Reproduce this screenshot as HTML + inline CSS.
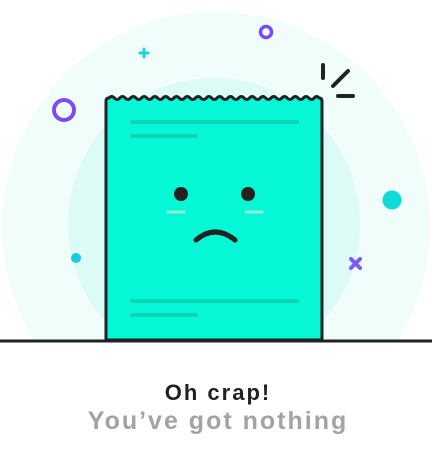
<!DOCTYPE html>
<html><head><style>
html,body{margin:0;padding:0;background:#fff;width:436px;height:459px;overflow:hidden}
.t{position:absolute;left:0;width:436px;text-align:center;font-family:"Liberation Sans",sans-serif;font-weight:bold}
</style></head><body>
<svg width="436" height="459" style="position:absolute;left:0;top:0">
<circle cx="216" cy="226" r="214" fill="#f0fdfb"/>
<circle cx="214" cy="224" r="146" fill="#dcfbf6"/>
<rect x="0" y="342" width="436" height="120" fill="#fff"/>
<path d="M106,340 L106,101 q0,-3 3,-3 q2.7,-3 5.4,0 q2.7,3 5.4,0 q2.7,-3 5.4,0 q2.7,3 5.4,0 q2.7,-3 5.4,0 q2.7,3 5.4,0 q2.7,-3 5.4,0 q2.7,3 5.4,0 q2.7,-3 5.4,0 q2.7,3 5.4,0 q2.7,-3 5.4,0 q2.7,3 5.4,0 q2.7,-3 5.4,0 q2.7,3 5.4,0 q2.7,-3 5.4,0 q2.7,3 5.4,0 q2.7,-3 5.4,0 q2.7,3 5.4,0 q2.7,-3 5.4,0 q2.7,3 5.4,0 q2.7,-3 5.4,0 q2.7,3 5.4,0 q2.7,-3 5.4,0 q2.7,3 5.4,0 q2.7,-3 5.4,0 q2.7,3 5.4,0 q2.7,-3 5.4,0 q2.7,3 5.4,0 q2.7,-3 5.4,0 q2.7,3 5.4,0 q2.7,-3 5.4,0 q2.7,3 5.4,0 q2.7,-3 5.4,0 q2.7,3 5.4,0 q2.7,-3 5.4,0 q2.7,3 5.4,0 q2.7,-3 5.4,0 q2.7,3 5.4,0 q2.4,-3 4.8,0 q3,0 3,3 L322,340 Z" fill="#05f7d6" stroke="#222" stroke-width="3" stroke-linejoin="round"/>
<g stroke="#0ad5b5" stroke-width="4" stroke-linecap="round">
<line x1="132" y1="122" x2="297" y2="122"/><line x1="132" y1="136" x2="196" y2="136"/>
<line x1="132" y1="301" x2="297" y2="301"/><line x1="132" y1="315" x2="196" y2="315"/>
</g>
<circle cx="181" cy="194" r="7" fill="#222"/><circle cx="248" cy="194" r="7" fill="#222"/>
<g stroke="#8ef0df" stroke-width="3" stroke-linecap="round"><line x1="168" y1="212" x2="184" y2="212"/><line x1="246" y1="212" x2="262" y2="212"/></g>
<path d="M196,240 Q215,224 235,240" fill="none" stroke="#222" stroke-width="5" stroke-linecap="round"/>
<g stroke="#222" stroke-width="4" stroke-linecap="round"><line x1="323" y1="65" x2="323" y2="78"/><line x1="333" y1="86" x2="348" y2="71"/><line x1="338" y1="96" x2="353" y2="96"/></g>
<line x1="0" y1="341" x2="432" y2="341" stroke="#222" stroke-width="3"/>
<circle cx="64" cy="110" r="10" fill="none" stroke="#7b4cf5" stroke-width="4"/>
<circle cx="266" cy="32" r="5.5" fill="none" stroke="#7b4cf5" stroke-width="3.5"/>
<g stroke="#1ed6d6" stroke-width="3" stroke-linecap="round"><line x1="144" y1="49" x2="144" y2="57"/><line x1="140" y1="53" x2="148" y2="53"/></g>
<circle cx="392" cy="200" r="9.5" fill="#11dada"/>
<circle cx="76" cy="258" r="5" fill="#19c9e6"/>
<g stroke="#7b5cf5" stroke-width="4" stroke-linecap="round"><line x1="351" y1="259" x2="360" y2="268"/><line x1="360" y1="259" x2="351" y2="268"/></g>
</svg>
<div class="t" style="top:380px;font-size:22px;letter-spacing:2px;color:#222">Oh crap!</div>
<div class="t" style="top:407px;font-size:25px;letter-spacing:2px;color:#a3a3a3">You’ve got nothing</div>
</body></html>
